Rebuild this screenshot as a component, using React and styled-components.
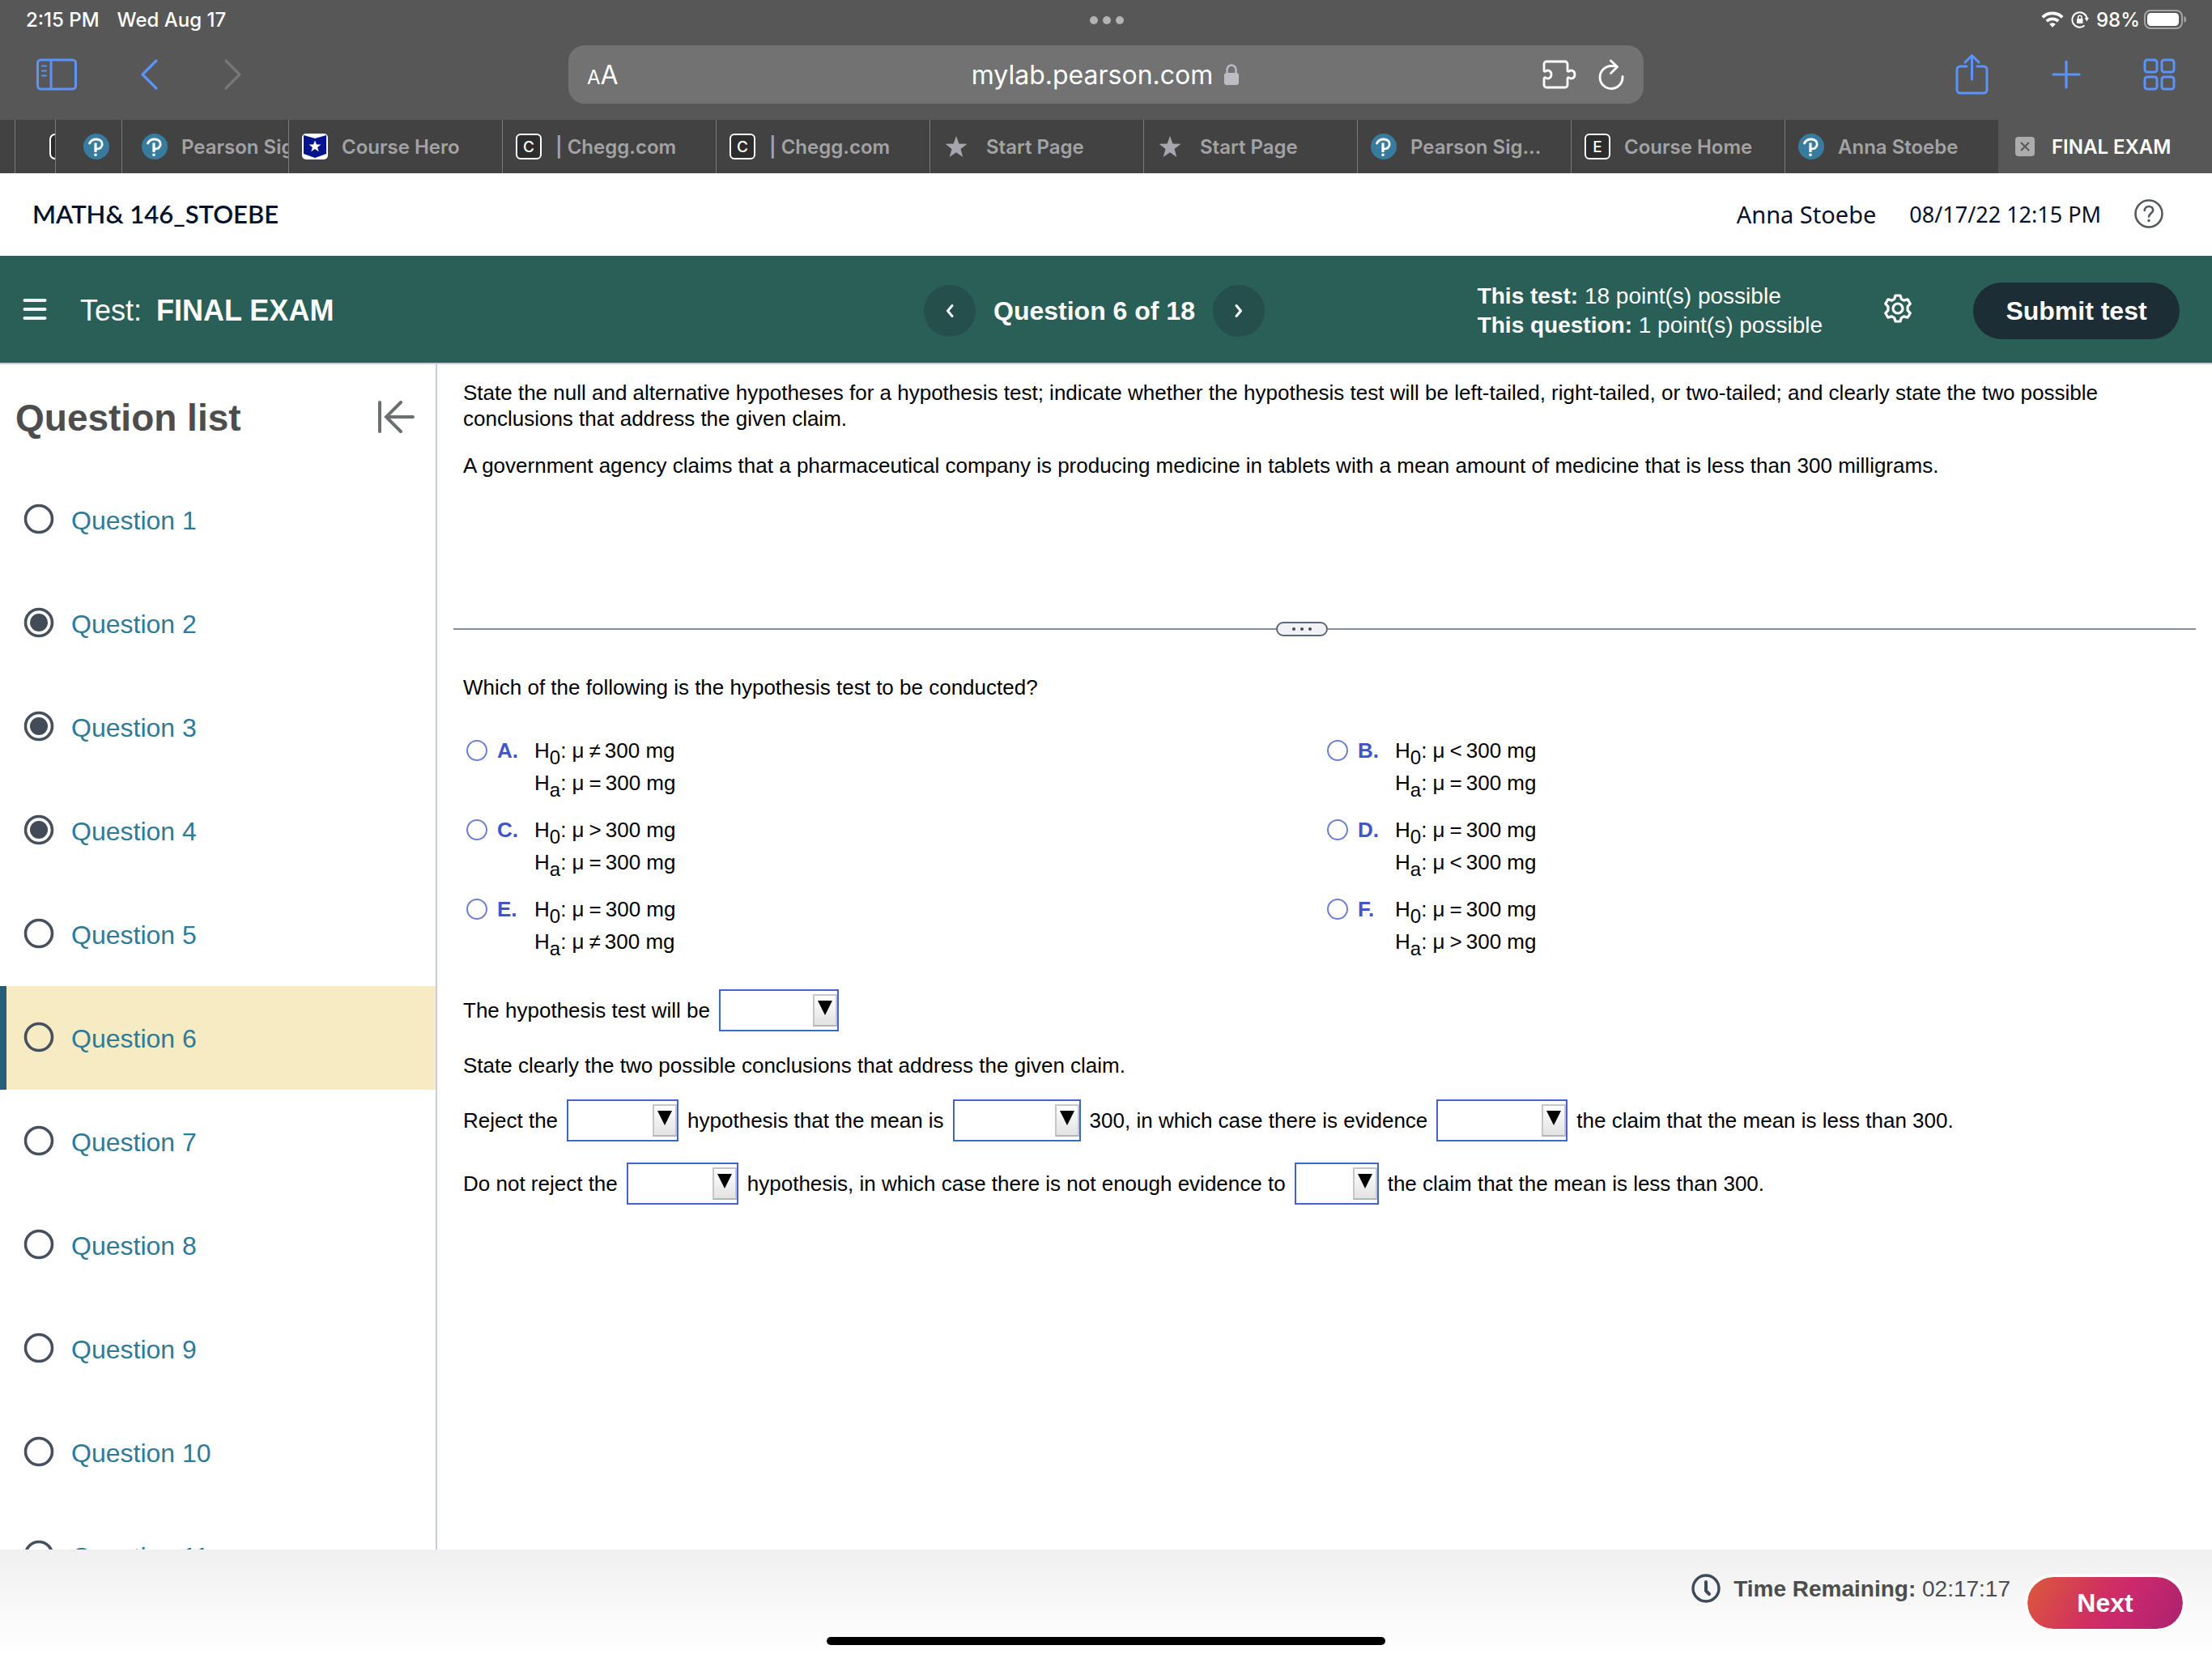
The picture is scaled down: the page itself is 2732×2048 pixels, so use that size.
import { useState } from "react";
import styled, { createGlobalStyle, css } from "styled-components";

const GlobalStyle = createGlobalStyle`
  * {
    box-sizing: border-box;
  }

  body {
    margin: 0;
    background: #fff;
    font-family: "Liberation Sans", Arial, sans-serif;
  }

  button,
  select {
    font: inherit;
  }
`;

const Page = styled.div`
  display: flex;
  flex-direction: column;
  height: 100vh;
  overflow: hidden;
`;

const IconButton = styled.button`
  display: flex;
  align-items: center;
  justify-content: center;
  padding: 0;
  border: 0;
  background: none;
  color: inherit;
  cursor: pointer;
`;

/* browser chrome */

const Chrome = styled.header`
  flex: none;
  background: #575757;
  color: #fff;
  font-family: Inter, sans-serif;
`;

const StatusBar = styled.div`
  display: grid;
  grid-template-columns: 1fr auto 1fr;
  align-items: center;
  height: 48px;
  padding: 0 30px 0 32px;
  font-size: 24px;
  font-weight: 500;
`;

const StatusGroup = styled.div`
  display: flex;
  align-items: center;
  justify-content: ${({ $end }) => ($end ? "flex-end" : "flex-start")};
  gap: ${({ $gap }) => $gap}px;
`;

const Toolbar = styled.div`
  display: grid;
  grid-template-columns: 1fr minmax(0, 1328px) 1fr;
  align-items: center;
  height: 100px;
  padding: 0 45px 12px;
`;

const ToolGroup = styled.div`
  display: flex;
  align-items: center;
  justify-content: ${({ $end }) => ($end ? "flex-end" : "flex-start")};
  gap: ${({ $gap }) => $gap}px;
  color: #5b93f8;
`;

const AddressBar = styled.div`
  display: grid;
  grid-template-columns: 1fr auto 1fr;
  align-items: center;
  height: 72px;
  padding: 0 24px 0 23px;
  border-radius: 20px;
  background: #727272;
`;

const TextSizeButton = styled(IconButton)`
  justify-self: start;
  align-items: baseline;
  font-size: 32px;

  small {
    font-size: 24px;
  }
`;

const Address = styled.div`
  display: flex;
  align-items: center;
  gap: 13px;
  font-size: 32px;
`;

const AddressTools = styled.div`
  display: flex;
  justify-content: flex-end;
  gap: 26px;
`;

const TabBar = styled.nav`
  display: grid;
  grid-template-columns: 50px 82px 206px repeat(9, minmax(0, 1fr));
  height: 66px;
  padding-left: 18px;
  background: #424242;
`;

const Tab = styled.a`
  display: flex;
  align-items: center;
  gap: 17px;
  overflow: hidden;
  padding-left: ${({ $inset = 16 }) => $inset}px;
  border-left: 1px solid #7b7b7b;
  color: #a3a3a5;
  font-size: 24px;
  font-weight: 600;
  white-space: nowrap;
  text-decoration: none;

  svg {
    flex: none;
  }

  ${({ $active }) =>
    $active &&
    css`
      padding-left: 20px;
      gap: 21px;
      border-left-color: #575757;
      background: #575757;
      color: #fff;
    `}
`;

const LetterBadge = styled.span`
  display: flex;
  align-items: center;
  justify-content: center;
  flex: none;
  width: 32px;
  height: 32px;
  border: 2px solid #fff;
  border-radius: 6px;
  background: #2c2c2c;
  color: #fff;
  font-size: 19px;
  font-weight: 500;
`;

/* course header */

const CourseBar = styled.header`
  display: flex;
  align-items: center;
  justify-content: space-between;
  flex: none;
  height: 102px;
  padding: 0 60px 2px 40px;
  color: #05112a;
  font-family: "Noto Sans", sans-serif;
  font-size: 29px;

  time {
    font-size: 27px;
  }
`;

const CourseName = styled.div`
  font-family: Lato, sans-serif;
  font-size: 31px;
  font-weight: 600;
`;

const CourseInfo = styled.div`
  display: flex;
  align-items: center;
  gap: 41px;
`;

const TestBar = styled.header`
  display: grid;
  grid-template-columns: 1113px auto 1fr;
  align-items: center;
  flex: none;
  height: 134px;
  padding: 4px 40px 0 28px;
  border-bottom: 2px solid #c9ccdb;
  background: #295f57;
  color: #fff;
`;

const TestTitle = styled.div`
  display: flex;
  align-items: center;
  gap: 41px;
  font-size: 36px;

  strong {
    margin-left: 8px;
  }
`;

const QuestionNav = styled.div`
  display: flex;
  align-items: center;
  gap: 22px;
  font-size: 32px;
  font-weight: bold;
`;

const RoundButton = styled(IconButton)`
  width: 64px;
  height: 64px;
  border-radius: 50%;
  background: #254f4d;
`;

const TestTools = styled.div`
  display: flex;
  align-items: center;
  justify-content: flex-end;
  gap: 75px;
`;

const Points = styled.div`
  font-size: 28px;
  line-height: 36px;
`;

const PillButton = styled.button`
  border: 0;
  color: #fff;
  font-size: 32px;
  font-weight: bold;
  cursor: pointer;
`;

const SubmitButton = styled(PillButton)`
  width: 255px;
  height: 70px;
  border-radius: 35px;
  background: #1d2d35;
`;

/* body */

const Body = styled.div`
  display: flex;
  flex: 1;
  min-height: 0;
`;

const Sidebar = styled.aside`
  flex: none;
  width: 540px;
  overflow: hidden;
  border-right: 2px solid #c9ccdb;
`;

const SidebarHeader = styled.div`
  display: flex;
  align-items: center;
  justify-content: space-between;
  height: 128px;
  padding: 3px 26px 0 19px;
  color: #4d4d4d;

  h2 {
    margin: 0;
    font-size: 46px;
  }
`;

const QuestionList = styled.ul`
  margin: 0;
  padding: 0;
  list-style: none;
`;

const QuestionRow = styled.li`
  height: 128px;
  border-left: 8px solid ${({ $current }) => ($current ? "#265d78" : "transparent")};
  background: ${({ $current }) => ($current ? "#f6ebc2" : "transparent")};
`;

const QuestionLink = styled.a`
  display: flex;
  align-items: center;
  gap: 21px;
  height: 100%;
  padding: 2px 0 0 21px;
  color: #2f7a97;
  font-size: 32px;
  text-decoration: none;
`;

const Content = styled.main`
  flex: 1;
  min-width: 0;
  padding: 19px 20px 0;
  color: #000;
  font-size: 26px;
  line-height: 32px;

  p {
    margin: 0 14px 26px 12px;
  }
`;

const Splitter = styled.div`
  display: flex;
  align-items: center;
  margin: 177px 0 47px;

  &::before,
  &::after {
    content: "";
    flex: 1 1 0;
    height: 2px;
    background: #878da1;
  }

  &::after {
    flex-basis: 56px;
  }
`;

const SplitterHandle = styled(IconButton)`
  gap: 6px;
  width: 64px;
  height: 18px;
  border: 2px solid #5d6879;
  border-radius: 9px;
  background: #f1f2f6;

  span {
    width: 4px;
    height: 4px;
    border-radius: 50%;
    background: #4a4a4a;
  }
`;

const Choices = styled.div`
  display: grid;
  grid-template-columns: 1fr 1fr;
  row-gap: 18px;
  margin: 42px 14px 0 12px;
`;

const Choice = styled.label`
  display: grid;
  grid-template-columns: 38px 46px auto;
  align-items: start;
  justify-content: start;
  padding-left: 4px;
  line-height: 40px;
`;

const ChoiceRadio = styled.input`
  appearance: none;
  width: 26px;
  height: 26px;
  margin: 7px 0 0;
  border: 2px solid #6f80d2;
  border-radius: 50%;
  background: #fff;

  &:checked {
    background: radial-gradient(#3f55c8 45%, #fff 50%);
  }
`;

const ChoiceLetter = styled.strong`
  color: #3f55c8;
`;

const Hypothesis = styled.div`
  sub {
    font-size: 24px;
    line-height: 0;
    vertical-align: -8px;
  }

  i {
    margin: 0 5px 0 6px;
    font-style: normal;
  }
`;

const Sentence = styled.div`
  display: flex;
  flex-wrap: wrap;
  align-items: center;
  gap: 11px;
  min-height: 52px;
  margin: ${({ $top }) => $top}px 14px 0 12px;
`;

const SelectBox = styled.span`
  display: inline-grid;
  grid-template-columns: ${({ $width }) => $width}px;
  align-items: center;
`;

const Select = styled.select`
  grid-area: 1 / 1;
  appearance: none;
  height: 52px;
  padding: 0 38px 0 8px;
  border: 2px solid #3f66c8;
  border-radius: 0;
  background: #fff;
`;

const SelectArrow = styled.span`
  grid-area: 1 / 1;
  justify-self: end;
  display: flex;
  justify-content: center;
  width: 30px;
  height: 40px;
  margin-right: 2px;
  padding-top: 6px;
  border: 2px solid #c6c6c6;
  border-bottom-color: #b4b4b4;
  background: linear-gradient(#fff, #e2e2e2);
  pointer-events: none;

  &::before {
    content: "";
    height: 0;
    border: 9px solid transparent;
    border-top: 18px solid #000;
    border-bottom: 0;
  }
`;

const Footer = styled.footer`
  display: grid;
  grid-template-rows: 98px 1fr;
  justify-items: center;
  flex: none;
  height: 134px;
  background: linear-gradient(#f0f0f0, #fff 96%);
`;

const FooterActions = styled.div`
  display: flex;
  align-items: flex-start;
  justify-self: stretch;
  justify-content: flex-end;
  gap: 17px;
  padding: 30px 32px 0;
`;

const TimeRemaining = styled.div`
  display: flex;
  align-items: center;
  gap: 16px;
  height: 38px;
  color: #4d4d4d;
  font-size: 28px;
`;

const NextButton = styled(PillButton)`
  width: 200px;
  height: 72px;
  border: 4px solid #fbfbfb;
  border-radius: 36px;
  background: linear-gradient(120deg, #db5a3b, #d03060 45%, #cb296c 60%, #ab2170) padding-box;
`;

const HomeIndicator = styled.div`
  width: 690px;
  height: 10px;
  margin-top: 10px;
  border-radius: 5px;
  background: #000;
`;

/* icons */

const PearsonIcon = () => (
  <svg width="32" height="32" viewBox="0 0 32 32" fill="none">
    <circle cx="16" cy="16" r="16" fill="#377c9f" />
    <path d="M7.500 12C9.500 8 13 6.800 16.500 7c4.500.3 7 3 6.700 6.300-.3 3.700-3.700 5.700-7.700 5.900" stroke="#fff" strokeWidth="2.800" strokeLinecap="round" />
    <path d="M15 11.500v11.500" stroke="#fff" strokeWidth="3.200" />
    <circle cx="15" cy="26.300" r="1.800" fill="#fff" />
  </svg>
);

const CourseHeroIcon = () => (
  <svg width="32" height="32" viewBox="0 0 32 32">
    <rect width="32" height="32" rx="5" fill="#fff" />
    <path d="M2 2l14 4 14-4v23l-14 5-14-5z" fill="#03148c" />
    <path d="M16 8.500l2 5h5.400l-4.300 3.400 1.600 5.300-4.700-3.200-4.700 3.200 1.600-5.300-4.300-3.400H14z" fill="#fff" />
  </svg>
);

const StarIcon = () => (
  <svg width="36" height="32" viewBox="0 0 36 32" fill="#a7a6ae">
    <path d="M16 3l3.400 9.600 10.100.2-8 6.200 2.800 9.900-8.300-5.700-8.300 5.700 2.800-9.900-8-6.200 10.100-.2z" />
  </svg>
);

const CloseIcon = () => (
  <svg width="24" height="24" viewBox="0 0 24 24">
    <rect width="24" height="24" rx="4" fill="#acacac" />
    <path d="M7 7l10 10M17 7L7 17" stroke="#575757" strokeWidth="2" />
  </svg>
);

const SidebarIcon = () => (
  <svg width="50" height="40" viewBox="0 0 50 40" fill="none" stroke="currentColor" strokeWidth="3">
    <rect x="1.500" y="2" width="47" height="36" rx="4" />
    <path d="M18 2v36" />
    <path d="M7 9.500h5M7 15.500h5M7 21.500h5" strokeWidth="2.200" strokeLinecap="round" />
  </svg>
);

const ChevronIcon = ({ forward }) => (
  <svg width="24" height="40" viewBox="0 0 24 40" fill="none" stroke={forward ? "#777" : "currentColor"} strokeWidth="3.200" strokeLinecap="round" strokeLinejoin="round">
    <path d={forward ? "M4 3l17 17L4 37" : "M20 3L3 20l17 17"} />
  </svg>
);

const LockIcon = () => (
  <svg width="20" height="28" viewBox="0 0 20 28" fill="none">
    <rect x="1" y="12" width="18" height="15" rx="3" fill="#bdbdc3" />
    <path d="M4.500 13V8a5.500 5.500 0 0 1 11 0v5" stroke="#bdbdc3" strokeWidth="2.400" />
  </svg>
);

const PuzzleIcon = () => (
  <svg width="44" height="36" viewBox="0 0 44 36" fill="none" stroke="#fff" strokeWidth="2.800" strokeLinejoin="round">
    <path d="M6 2h23a3 3 0 0 1 3 3v8c0 1.500 1.200 1.600 2 1 3-2.400 7-.2 7 4s-4 6.400-7 4c-.8-.6-2-.5-2 1v8a3 3 0 0 1-3 3H6a3 3 0 0 1-3-3v-8c0-1.500 1.200-1.600 2-1 3 2.400 7 .2 7-4s-4-6.400-7-4c-.8.600-2 .5-2-1V5a3 3 0 0 1 3-3z" />
  </svg>
);

const ReloadIcon = () => (
  <svg width="32" height="38" viewBox="0 0 32 38" fill="none" stroke="#fff" strokeWidth="2.800" strokeLinecap="round" strokeLinejoin="round">
    <path d="M30 21.500A14 14 0 1 1 16 8.500c3 0 5.500.2 7 .5M15.500 2l8 7.500-8 8" />
  </svg>
);

const ShareIcon = () => (
  <svg width="42" height="50" viewBox="0 0 42 50" fill="none" stroke="currentColor" strokeWidth="3" strokeLinecap="round" strokeLinejoin="round">
    <path d="M14 15H6a4 4 0 0 0-4 4v25a4 4 0 0 0 4 4h29a4 4 0 0 0 4-4V19a4 4 0 0 0-4-4h-8M20.500 31V2M12 10l8.500-8.500L29 10" />
  </svg>
);

const PlusIcon = () => (
  <svg width="36" height="36" viewBox="0 0 36 36" stroke="currentColor" strokeWidth="3.200" strokeLinecap="round">
    <path d="M18 2v32M2 18h32" />
  </svg>
);

const GridIcon = () => (
  <svg width="40" height="40" viewBox="0 0 40 40" fill="none" stroke="currentColor" strokeWidth="3">
    <rect x="2" y="2" width="15" height="15" rx="3" />
    <rect x="23" y="2" width="15" height="15" rx="3" />
    <rect x="2" y="23" width="15" height="15" rx="3" />
    <rect x="23" y="23" width="15" height="15" rx="3" />
  </svg>
);

const DotsIcon = () => (
  <svg width="44" height="12" viewBox="0 0 44 12" fill="#b3b3b3">
    <circle cx="6" cy="7" r="5" />
    <circle cx="22" cy="7" r="5" />
    <circle cx="38" cy="7" r="5" />
  </svg>
);

const WifiIcon = () => (
  <svg width="28" height="22" viewBox="0 0 28 22" fill="none" stroke="#fff" strokeWidth="3.800">
    <path d="M1.800 8.300a17.500 17.500 0 0 1 24.400 0M6.800 13.200a10.500 10.500 0 0 1 14.400 0" />
    <path d="M14 20.800l-3.900-4a5.700 5.700 0 0 1 7.800 0z" fill="#fff" stroke="none" />
  </svg>
);

const RotationLockIcon = () => (
  <svg width="22" height="22" viewBox="0 0 22 22" fill="none" stroke="#fff" strokeWidth="2">
    <path d="M16.500 18.500A9.200 9.200 0 1 1 19.700 10" />
    <path d="M16.700 9h5.300l-2.600 4.500z" fill="#fff" stroke="none" />
    <rect x="7" y="10" width="7.500" height="6" rx="1" fill="#fff" stroke="none" />
    <path d="M8.600 10.500V8.400a2.200 2.200 0 0 1 4.400 0v2.100" strokeWidth="1.500" />
  </svg>
);

const BatteryIcon = () => (
  <svg width="54" height="24" viewBox="0 0 54 24">
    <rect x="1" y="1" width="46" height="22" rx="7" fill="none" stroke="#a5a5a5" strokeWidth="2" />
    <rect x="4" y="4" width="39" height="16" rx="4.500" fill="#fff" />
    <path d="M49.500 8c3.500 1 3.500 7 0 8z" fill="#a5a5a5" />
  </svg>
);

const HelpIcon = () => (
  <svg width="36" height="36" viewBox="0 0 36 36" fill="none" stroke="#55585c" strokeWidth="2.600" strokeLinecap="round">
    <circle cx="18" cy="18" r="16.500" />
    <path d="M12.800 14c0-3 2.200-5 5.200-5s5.200 1.900 5.200 4.700c0 3.500-5.200 4-5.200 7.800" />
    <circle cx="18" cy="26.500" r="1" fill="#55585c" strokeWidth="1.500" />
  </svg>
);

const MenuIcon = () => (
  <svg width="30" height="32" viewBox="0 0 30 32" stroke="#f3f4f7" strokeWidth="4" strokeLinecap="round">
    <path d="M2.500 3h25M2.500 14h25M2.500 25h25" />
  </svg>
);

const SmallChevron = ({ next }) => (
  <svg width="12" height="18" viewBox="0 0 12 18" fill="none" stroke="#fff" strokeWidth="3" strokeLinecap="round" strokeLinejoin="round">
    <path d={next ? "M3 2.500L8.500 9 3 15.500" : "M9 2.500L3.500 9 9 15.500"} />
  </svg>
);

const GearIcon = () => (
  <svg width="36" height="42" viewBox="0 0 36 42" fill="none" stroke="#fff" strokeWidth="3.200" strokeLinejoin="round">
    <path d="M15 2h6l1.300 4.300 3.200 1.800 4.600-1.300 3.200 5.400-3.200 3.400v4.800l3.200 3.400-3.200 5.400-4.600-1.300-3.200 1.800L21 34h-6l-1.300-4.300-3.200-1.800-4.600 1.300-3.200-5.400 3.200-3.400v-4.800l-3.200-3.400 3.200-5.400 4.600 1.300 3.200-1.800z" />
    <circle cx="18" cy="18" r="6" />
  </svg>
);

const CollapseIcon = () => (
  <svg width="46" height="42" viewBox="0 0 46 42" fill="none" stroke="#6a7070" strokeWidth="4" strokeLinecap="round">
    <path d="M3 2v36M44 20H11M29 2L11 20l18 18" />
  </svg>
);

const StatusIcon = ({ answered }) => (
  <svg width="38" height="42" viewBox="0 0 38 42">
    <circle cx="19" cy="19" r="16.500" fill="#fff" fillOpacity={answered ? 1 : 0} stroke="#47505d" strokeWidth="3.600" />
    {answered && <circle cx="19" cy="19" r="11" fill="#424b57" />}
  </svg>
);

const ClockIcon = () => (
  <svg width="36" height="38" viewBox="0 0 36 38" fill="none" stroke="#3d4a5a" strokeWidth="3.400" strokeLinecap="round" strokeLinejoin="round">
    <circle cx="18" cy="18" r="16" />
    <path d="M18 10v11l4 4" strokeWidth="4" />
  </svg>
);

const tabs = [
  { icon: <PearsonIcon />, label: "Pearson Sig", inset: 24 },
  { icon: <CourseHeroIcon />, label: "Course Hero" },
  { icon: <LetterBadge>C</LetterBadge>, label: "| Chegg.com" },
  { icon: <LetterBadge>C</LetterBadge>, label: "| Chegg.com" },
  { icon: <StarIcon />, label: "Start Page" },
  { icon: <StarIcon />, label: "Start Page" },
  { icon: <PearsonIcon />, label: "Pearson Sig..." },
  { icon: <LetterBadge>E</LetterBadge>, label: "Course Home" },
  { icon: <PearsonIcon />, label: "Anna Stoebe" },
  { icon: <CloseIcon />, label: "FINAL EXAM", active: true },
];

const choices = [
  { letter: "A", h0: "≠", ha: "=" },
  { letter: "B", h0: "<", ha: "=" },
  { letter: "C", h0: ">", ha: "=" },
  { letter: "D", h0: "=", ha: "<" },
  { letter: "E", h0: "=", ha: "≠" },
  { letter: "F", h0: "=", ha: ">" },
];

const answered = [2, 3, 4];
const currentQuestion = 6;

const DropDown = ({ label, width }) => (
  <SelectBox $width={width}>
    <Select aria-label={label} defaultValue="">
      <option value=""></option>
    </Select>
    <SelectArrow />
  </SelectBox>
);

const BrowserChrome = () => (
  <Chrome>
    <StatusBar>
      <StatusGroup $gap={22}>
        <span>2:15 PM</span>
        <span>Wed Aug 17</span>
      </StatusGroup>
      <DotsIcon />
      <StatusGroup $end $gap={9}>
        <WifiIcon />
        <RotationLockIcon />
        <StatusGroup $gap={5}>
          <span>98%</span>
          <BatteryIcon />
        </StatusGroup>
      </StatusGroup>
    </StatusBar>
    <Toolbar>
      <ToolGroup $gap={78}>
        <IconButton aria-label="Show sidebar"><SidebarIcon /></IconButton>
        <IconButton aria-label="Back"><ChevronIcon /></IconButton>
        <IconButton aria-label="Forward"><ChevronIcon forward /></IconButton>
      </ToolGroup>
      <AddressBar>
        <TextSizeButton aria-label="Text size"><small>A</small>A</TextSizeButton>
        <Address>
          <span>mylab.pearson.com</span>
          <LockIcon />
        </Address>
        <AddressTools>
          <IconButton aria-label="Extensions"><PuzzleIcon /></IconButton>
          <IconButton aria-label="Reload"><ReloadIcon /></IconButton>
        </AddressTools>
      </AddressBar>
      <ToolGroup $end $gap={77}>
        <IconButton aria-label="Share"><ShareIcon /></IconButton>
        <IconButton aria-label="New tab"><PlusIcon /></IconButton>
        <IconButton aria-label="All tabs"><GridIcon /></IconButton>
      </ToolGroup>
    </Toolbar>
    <TabBar>
      <Tab href="#">
        <svg width="34" height="32" viewBox="0 0 34 32">
          <rect x="27" y="1" width="30" height="30" rx="6" fill="#2c2c2c" stroke="#fff" strokeWidth="2" />
        </svg>
      </Tab>
      <Tab href="#" $inset={34}>
        <PearsonIcon />
      </Tab>
      {tabs.map(({ icon, label, inset, active }, index) => (
        <Tab key={index} href="#" $inset={inset} $active={active}>
          {icon}
          <span>{label}</span>
        </Tab>
      ))}
    </TabBar>
  </Chrome>
);

const QuestionSidebar = () => (
  <Sidebar>
    <SidebarHeader>
      <h2>Question list</h2>
      <IconButton aria-label="Collapse question list"><CollapseIcon /></IconButton>
    </SidebarHeader>
    <QuestionList>
      {Array.from({ length: 11 }, (_, i) => i + 1).map((number) => (
        <QuestionRow key={number} $current={number === currentQuestion}>
          <QuestionLink href="#">
            <StatusIcon answered={answered.includes(number)} />
            <span>Question {number}</span>
          </QuestionLink>
        </QuestionRow>
      ))}
    </QuestionList>
  </Sidebar>
);

const QuestionContent = () => {
  const [choice, setChoice] = useState("");

  return (
    <Content>
      <p>
        State the null and alternative hypotheses for a hypothesis test; indicate whether the hypothesis test will be
        left-tailed, right-tailed, or two-tailed; and clearly state the two possible conclusions that address the
        given claim.
      </p>
      <p>
        A government agency claims that a pharmaceutical company is producing medicine in tablets with a mean amount
        of medicine that is less than 300 milligrams.
      </p>
      <Splitter>
        <SplitterHandle aria-label="Resize">
          <span />
          <span />
          <span />
        </SplitterHandle>
      </Splitter>
      <p>Which of the following is the hypothesis test to be conducted?</p>
      <Choices>
        {choices.map(({ letter, h0, ha }) => (
          <Choice key={letter}>
            <ChoiceRadio
              type="radio"
              name="hypothesis"
              checked={choice === letter}
              onChange={() => setChoice(letter)}
            />
            <ChoiceLetter>{letter}.</ChoiceLetter>
            <div>
              <Hypothesis>H<sub>0</sub>: μ<i>{h0}</i>300 mg</Hypothesis>
              <Hypothesis>H<sub>a</sub>: μ<i>{ha}</i>300 mg</Hypothesis>
            </div>
          </Choice>
        ))}
      </Choices>
      <Sentence $top={39}>
        The hypothesis test will be
        <DropDown label="Type of test" width={148} />
      </Sentence>
      <Sentence $top={16}>State clearly the two possible conclusions that address the given claim.</Sentence>
      <Sentence $top={16}>
        Reject the
        <DropDown label="Rejected hypothesis" width={138} />
        hypothesis that the mean is
        <DropDown label="Mean comparison" width={158} />
        300, in which case there is evidence
        <DropDown label="Evidence" width={162} />
        the claim that the mean is less than 300.
      </Sentence>
      <Sentence $top={26}>
        Do not reject the
        <DropDown label="Hypothesis not rejected" width={138} />
        hypothesis, in which case there is not enough evidence to
        <DropDown label="Conclusion" width={104} />
        the claim that the mean is less than 300.
      </Sentence>
    </Content>
  );
};

const App = () => (
  <>
    <GlobalStyle />
    <Page>
      <BrowserChrome />
      <CourseBar>
        <CourseName>MATH&amp; 146_STOEBE</CourseName>
        <CourseInfo>
          <span>Anna Stoebe</span>
          <time>08/17/22 12:15 PM</time>
          <IconButton aria-label="Help"><HelpIcon /></IconButton>
        </CourseInfo>
      </CourseBar>
      <TestBar>
        <TestTitle>
          <IconButton aria-label="Menu"><MenuIcon /></IconButton>
          <span>Test: <strong>FINAL EXAM</strong></span>
        </TestTitle>
        <QuestionNav>
          <RoundButton aria-label="Previous question"><SmallChevron /></RoundButton>
          <span>Question 6 of 18</span>
          <RoundButton aria-label="Next question"><SmallChevron next /></RoundButton>
        </QuestionNav>
        <TestTools>
          <Points>
            <div><strong>This test:</strong> 18 point(s) possible</div>
            <div><strong>This question:</strong> 1 point(s) possible</div>
          </Points>
          <IconButton aria-label="Settings"><GearIcon /></IconButton>
          <SubmitButton>Submit test</SubmitButton>
        </TestTools>
      </TestBar>
      <Body>
        <QuestionSidebar />
        <QuestionContent />
      </Body>
      <Footer>
        <FooterActions>
          <TimeRemaining>
            <ClockIcon />
            <span><strong>Time Remaining:</strong> 02:17:17</span>
          </TimeRemaining>
          <NextButton>Next</NextButton>
        </FooterActions>
        <HomeIndicator />
      </Footer>
    </Page>
  </>
);

export default App;
